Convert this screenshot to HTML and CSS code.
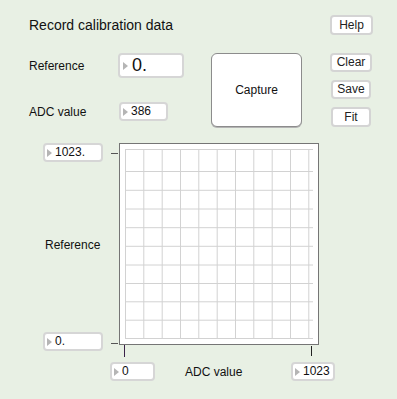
FILE: index.html
```html
<!DOCTYPE html>
<html lang="en">
<head>
    <meta charset="UTF-8">
    <title>Record calibration data</title>
    <link rel="stylesheet" href="styles.css">
</head>
<body>
    <div class="patch">
        <header class="head">
            <h1 class="title">Record calibration data</h1>
            <button class="btn btn-help">Help</button>
        </header>

        <section class="controls">
            <div class="fields">
                <div class="field field-ref">
                    <span class="label">Reference</span>
                    <div class="numbox numbox-big"><span class="arrow"></span>0.</div>
                </div>
                <div class="field field-adc">
                    <span class="label">ADC value</span>
                    <div class="numbox numbox-adc"><span class="arrow"></span>386</div>
                </div>
            </div>
            <button class="capture">Capture</button>
            <div class="actions">
                <button class="btn btn-clear">Clear</button>
                <button class="btn btn-save">Save</button>
                <button class="btn btn-fit">Fit</button>
            </div>
        </section>

        <section class="chart">
            <div class="yaxis">
                <div class="numbox numbox-axis"><span class="arrow"></span>1023.</div>
                <span class="axis-label">Reference</span>
                <div class="numbox numbox-axis numbox-low"><span class="arrow"></span>0.</div>
            </div>
            <div class="yticks">
                <span class="ytick ytick-top"></span>
                <span class="ytick ytick-bottom"></span>
            </div>
            <div class="plot">
                <svg width="198" height="200" viewBox="0 0 198 200">
                    <g stroke="#d2d2d2" stroke-width="1">
                        <line x1="5.5" y1="5" x2="5.5" y2="195"/>
                        <line x1="23.8" y1="5" x2="23.8" y2="195"/>
                        <line x1="42.2" y1="5" x2="42.2" y2="195"/>
                        <line x1="60.5" y1="5" x2="60.5" y2="195"/>
                        <line x1="78.8" y1="5" x2="78.8" y2="195"/>
                        <line x1="97.2" y1="5" x2="97.2" y2="195"/>
                        <line x1="115.5" y1="5" x2="115.5" y2="195"/>
                        <line x1="133.8" y1="5" x2="133.8" y2="195"/>
                        <line x1="152.2" y1="5" x2="152.2" y2="195"/>
                        <line x1="170.5" y1="5" x2="170.5" y2="195"/>
                        <line x1="188.8" y1="5" x2="188.8" y2="195"/>
                        <line x1="5" y1="5.5" x2="193" y2="5.5"/>
                        <line x1="5" y1="27.5" x2="193" y2="27.5"/>
                        <line x1="5" y1="46.3" x2="193" y2="46.3"/>
                        <line x1="5" y1="65" x2="193" y2="65"/>
                        <line x1="5" y1="83.7" x2="193" y2="83.7"/>
                        <line x1="5" y1="102.3" x2="193" y2="102.3"/>
                        <line x1="5" y1="121" x2="193" y2="121"/>
                        <line x1="5" y1="139.5" x2="193" y2="139.5"/>
                        <line x1="5" y1="157.8" x2="193" y2="157.8"/>
                        <line x1="5" y1="176.2" x2="193" y2="176.2"/>
                        <line x1="5" y1="194.5" x2="193" y2="194.5"/>
                    </g>
                </svg>
            </div>
            <div class="xticks">
                <span class="xtick xtick-left"></span>
                <span class="xtick xtick-right"></span>
            </div>
        </section>

        <section class="xaxis">
            <div class="numbox numbox-x0"><span class="arrow"></span>0</div>
            <span class="xaxis-label">ADC value</span>
            <div class="numbox numbox-x1"><span class="arrow"></span>1023</div>
        </section>
    </div>
</body>
</html>
```

FILE: styles.css
```css
* {
    box-sizing: border-box;
}
body {
    margin: 0;
    background: #e8f0e4;
    color: #111;
    font-family: 'Liberation Sans', Arial, sans-serif;
    font-size: 12px;
}
.patch {
    width: 397px;
    height: 399px;
    overflow: hidden;
}

/* header */
.head {
    display: flex;
    justify-content: space-between;
    align-items: center;
    height: 20px;
    margin-top: 15px;
    padding: 0 24px 0 29px;
}
.title {
    margin: 0;
    font-size: 14px;
    font-weight: normal;
    line-height: 20px;
}

/* buttons */
.btn {
    height: 19px;
    padding: 0;
    background: #fff;
    border: 2px solid #d4d4d4;
    border-radius: 4px;
    font-family: inherit;
    font-size: 12px;
    color: #222;
    line-height: 15px;
}
.btn-help {
    width: 43px;
    height: 20px;
}
.btn-clear {
    width: 42px;
}
.btn-save,
.btn-fit {
    width: 40px;
    margin-left: 1px;
}
.btn-fit {
    height: 20px;
}

/* number boxes */
.numbox {
    display: flex;
    align-items: center;
    background: #fff;
    border: 2px solid #d6d6d6;
    border-radius: 4px;
    padding-left: 2px;
    height: 19px;
    line-height: 15px;
}
.arrow {
    width: 0;
    height: 0;
    border-left: 5px solid #b5b5b5;
    border-top: 4.5px solid transparent;
    border-bottom: 4.5px solid transparent;
    margin-right: 3px;
}

/* controls */
.controls {
    display: flex;
    align-items: flex-start;
    margin-top: 18px;
    padding-left: 29px;
    height: 74px;
}
.fields {
    width: 182px;
}
.field {
    display: flex;
    align-items: center;
}
.field-ref {
    height: 25px;
}
.field-adc {
    height: 19px;
    margin-top: 24px;
}
.field-ref .label {
    width: 89px;
}
.field-adc .label {
    width: 90px;
}
.numbox-big {
    width: 66px;
    height: 25px;
    font-size: 18px;
    line-height: 21px;
    padding-left: 3px;
}
.numbox-big .arrow {
    margin-right: 4px;
}
.numbox-adc {
    width: 49px;
}
.capture {
    width: 91px;
    height: 74px;
    padding: 0;
    background: #fff;
    border: 1px solid #8c8c8c;
    border-radius: 6px;
    box-shadow: 0 1px 0 #b4b4b4;
    font-family: inherit;
    font-size: 12px;
    color: #111;
}
.actions {
    display: flex;
    flex-direction: column;
    align-items: flex-start;
    gap: 8px;
    margin-left: 28px;
}

/* chart */
.chart {
    display: grid;
    grid-template-columns: 60px 16px 200px;
    grid-template-rows: 202px 12px;
    margin: 16px 0 0 43px;
}
.yaxis {
    grid-row: 1 / 3;
    display: flex;
    flex-direction: column;
}
.numbox-axis {
    width: 60px;
}
.axis-label {
    margin-top: 76px;
    padding-left: 2px;
    line-height: 14px;
}
.numbox-low {
    margin-top: auto;
    margin-bottom: 6px;
}
.yticks {
    display: flex;
    flex-direction: column;
    padding-left: 8px;
}
.ytick {
    width: 7px;
    height: 1px;
    background: #555;
}
.ytick-top {
    margin-top: 10px;
}
.ytick-bottom {
    margin-top: 189px;
}
.plot {
    width: 200px;
    height: 202px;
    background: #fff;
    border: 1px solid #757575;
}
.plot svg {
    display: block;
}
.xticks {
    grid-column: 3;
    display: flex;
    justify-content: space-between;
    padding: 0 7px 0 5px;
}
.xtick {
    width: 1px;
    height: 12px;
    background: #3a2148;
}
.xtick-right {
    height: 10px;
    margin-top: 1px;
    background: #222;
}

/* x axis */
.xaxis {
    display: flex;
    align-items: center;
    margin-top: 5px;
    padding-left: 110px;
}
.numbox-x0 {
    width: 45px;
}
.xaxis-label {
    width: 106px;
    margin-left: 30px;
}
.numbox-x1 {
    width: 44px;
}
```
